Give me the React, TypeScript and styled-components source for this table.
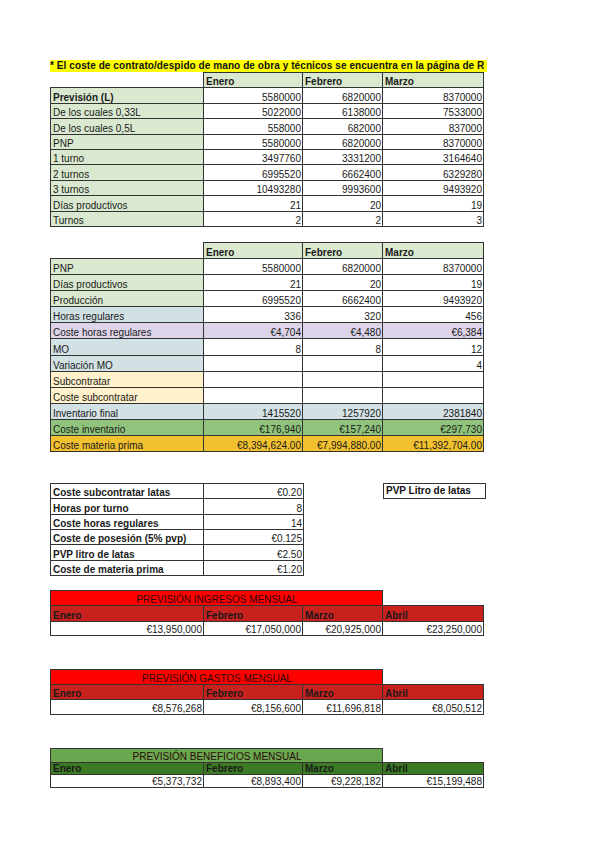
import styled, { createGlobalStyle } from 'styled-components'
import type { FC } from 'react'

const GlobalStyle = createGlobalStyle`
  body {
    margin: 0;
    background: #ffffff;
    font-family: "Liberation Sans", Arial, sans-serif;
    color: #111111;
  }
`

const COLS = [153, 99, 80, 101]
const LINE = '#333333'

const fills = {
  none: 'transparent',
  green: '#d9e8cf',
  blue: '#d2e1e4',
  lilac: '#ddd4ea',
  cream: '#fff1cb',
  mint: '#90c47c',
  amber: '#f2c130',
}
type Fill = keyof typeof fills

const Page = styled.div`
  padding: 60px 0 40px 50px;
  display: flex;
  flex-direction: column;
  align-items: flex-start;
`

const Banner = styled.div`
  width: 437px;
  height: 12px;
  background: #ffff00;
  font-size: 10px;
  font-weight: bold;
  line-height: 12px;
  white-space: nowrap;
  letter-spacing: 0.08px;
`

const Sheet = styled.table<{ $gap?: number }>`
  border-collapse: collapse;
  table-layout: fixed;
  margin-top: ${p => p.$gap ?? 0}px;
  font-size: 10px;
`

const Row = styled.tr<{ $h: number }>`
  height: ${p => p.$h}px;
`

const Cell = styled.td<{ $fill?: string; $bold?: boolean; $align?: string; $empty?: boolean; $ink?: string }>`
  padding: 0 1px 0 2px;
  line-height: 11px;
  vertical-align: bottom;
  white-space: nowrap;
  overflow: hidden;
  background: ${p => p.$fill ?? 'transparent'};
  font-weight: ${p => (p.$bold ? 'bold' : 'normal')};
  text-align: ${p => p.$align ?? 'left'};
  color: ${p => p.$ink ?? '#1a1a1a'};
  border: ${p => (p.$empty ? 'none' : `1px solid ${LINE}`)};
`

const ParamBlock = styled.div`
  display: flex;
  align-items: flex-start;
  gap: 79px;
  margin-top: 31px;
`

const NoteBox = styled.div`
  width: 99px;
  height: 14px;
  border: 1px solid ${LINE};
  font-size: 10px;
  font-weight: bold;
  line-height: 14px;
  padding-left: 2px;
  box-sizing: content-box;
  white-space: nowrap;
`

type DataRow = { label: string; values: string[]; bold?: boolean; labelFill?: Fill; rowFill?: Fill }

const Cols: FC<{ widths: number[] }> = ({ widths }) => (
  <colgroup>
    {widths.map((w, i) => <col key={i} style={{ width: w }} />)}
  </colgroup>
)

const MonthTable: FC<{ rows: DataRow[]; rowH: number; gap?: number }> = ({ rows, rowH, gap }) => (
  <Sheet $gap={gap}>
    <Cols widths={COLS.slice(0, 4)} />
    <tbody>
      <Row $h={rowH}>
        <Cell $empty />
        {['Enero', 'Febrero', 'Marzo'].map(m => (
          <Cell key={m} $fill={fills.green} $bold>{m}</Cell>
        ))}
      </Row>
      {rows.map(r => (
        <Row key={r.label} $h={rowH}>
          <Cell $fill={fills[r.rowFill ?? r.labelFill ?? 'green']} $bold={r.bold}>{r.label}</Cell>
          {r.values.map((v, i) => (
            <Cell key={i} $align="right" $fill={r.rowFill ? fills[r.rowFill] : '#ffffff'}>{v}</Cell>
          ))}
        </Row>
      ))}
    </tbody>
  </Sheet>
)

const Forecast: FC<{ title: string; values: string[]; titleFill: string; headFill: string; gap: number; heights: number[] }> = ({ title, values, titleFill, headFill, gap, heights }) => (
  <Sheet $gap={gap}>
    <Cols widths={COLS} />
    <tbody>
      <Row $h={heights[0]}>
        <Cell colSpan={3} $fill={titleFill} $align="center" $ink="#2a0a0a">{title}</Cell>
        <Cell $empty />
      </Row>
      <Row $h={heights[1]}>
        {['Enero', 'Febrero', 'Marzo', 'Abril'].map(m => (
          <Cell key={m} $fill={headFill} $bold>{m}</Cell>
        ))}
      </Row>
      <Row $h={heights[2]}>
        {values.map((v, i) => (
          <Cell key={i} $align="right" $fill="#ffffff">{v}</Cell>
        ))}
      </Row>
    </tbody>
  </Sheet>
)

const plan: DataRow[] = [
  { label: 'Previsión (L)', values: ['5580000', '6820000', '8370000'], bold: true },
  { label: 'De los cuales 0,33L', values: ['5022000', '6138000', '7533000'] },
  { label: 'De los cuales 0,5L', values: ['558000', '682000', '837000'] },
  { label: 'PNP', values: ['5580000', '6820000', '8370000'] },
  { label: '1 turno', values: ['3497760', '3331200', '3164640'] },
  { label: '2 turnos', values: ['6995520', '6662400', '6329280'] },
  { label: '3 turnos', values: ['10493280', '9993600', '9493920'] },
  { label: 'Días productivos', values: ['21', '20', '19'] },
  { label: 'Turnos', values: ['2', '2', '3'] },
]

const production: DataRow[] = [
  { label: 'PNP', values: ['5580000', '6820000', '8370000'] },
  { label: 'Días productivos', values: ['21', '20', '19'] },
  { label: 'Producción', values: ['6995520', '6662400', '9493920'] },
  { label: 'Horas regulares', values: ['336', '320', '456'], labelFill: 'blue' },
  { label: 'Coste horas regulares', values: ['€4,704', '€4,480', '€6,384'], rowFill: 'lilac' },
  { label: 'MO', values: ['8', '8', '12'], labelFill: 'blue' },
  { label: 'Variación MO', values: ['', '', '4'], labelFill: 'blue' },
  { label: 'Subcontratar', values: ['', '', ''], labelFill: 'cream' },
  { label: 'Coste subcontratar', values: ['', '', ''], labelFill: 'cream' },
  { label: 'Inventario final', values: ['1415520', '1257920', '2381840'], rowFill: 'blue' },
  { label: 'Coste inventario', values: ['€176,940', '€157,240', '€297,730'], rowFill: 'mint' },
  { label: 'Coste materia prima', values: ['€8,394,624.00', '€7,994,880.00', '€11,392,704.00'], rowFill: 'amber' },
]

const params: [string, string][] = [
  ['Coste subcontratar latas', '€0.20'],
  ['Horas por turno', '8'],
  ['Coste horas regulares', '14'],
  ['Coste de posesión (5% pvp)', '€0.125'],
  ['PVP litro de latas', '€2.50'],
  ['Coste de materia prima', '€1.20'],
]

export default function App() {
  return (
    <>
      <GlobalStyle />
      <Page>
        <Banner>* El coste de contrato/despido de mano de obra y técnicos se encuentra en la página de R</Banner>
        <MonthTable rows={plan} rowH={15.4} />
        <MonthTable rows={production} rowH={16.1} gap={15} />

        <ParamBlock>
          <Sheet>
            <Cols widths={[153, 100]} />
            <tbody>
              {params.map(([k, v]) => (
                <Row key={k} $h={15.3}>
                  <Cell $bold>{k}</Cell>
                  <Cell $align="right">{v}</Cell>
                </Row>
              ))}
            </tbody>
          </Sheet>
          <NoteBox>PVP Litro de latas</NoteBox>
        </ParamBlock>

        <Forecast
          title="PREVISIÓN INGRESOS MENSUAL"
          values={['€13,950,000', '€17,050,000', '€20,925,000', '€23,250,000']}
          titleFill="#ff0000"
          headFill="#c9211e"
          gap={14}
          heights={[15.3, 15.3, 14.3]}
        />
        <Forecast
          title="PREVISIÓN GASTOS MENSUAL"
          values={['€8,576,268', '€8,156,600', '€11,696,818', '€8,050,512']}
          titleFill="#ff0000"
          headFill="#c9211e"
          gap={33}
          heights={[15.3, 15.3, 14.3]}
        />
        <Forecast
          title="PREVISIÓN BENEFICIOS MENSUAL"
          values={['€5,373,732', '€8,893,400', '€9,228,182', '€15,199,488']}
          titleFill="#6aa84f"
          headFill="#3c7a24"
          gap={33}
          heights={[14.3, 12.3, 12.3]}
        />
      </Page>
    </>
  )
}
